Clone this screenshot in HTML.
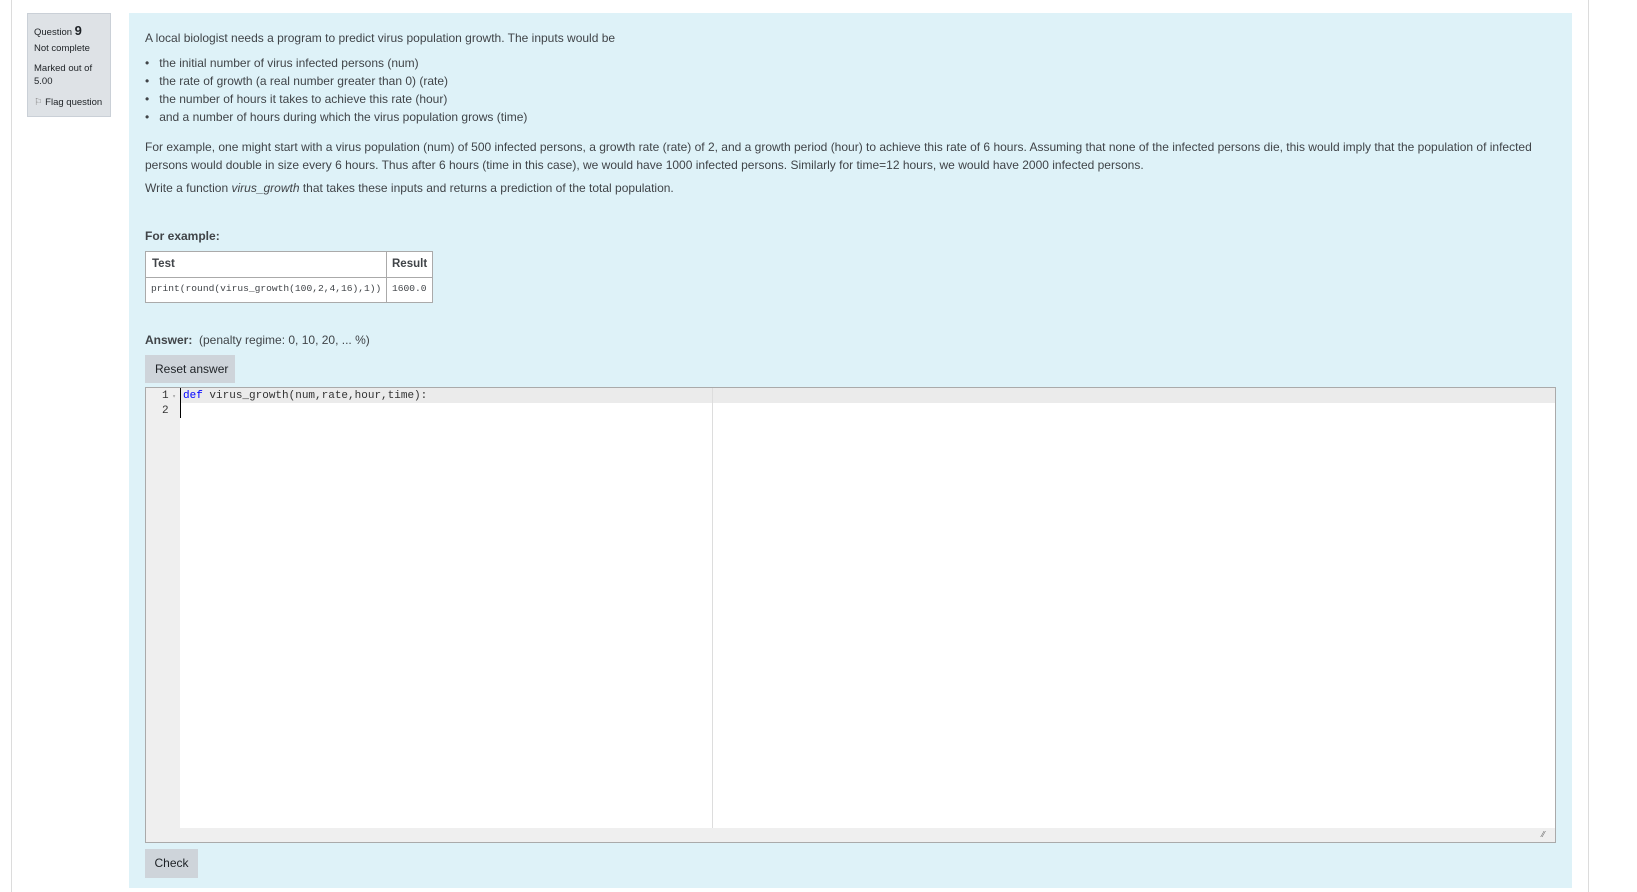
<!DOCTYPE html>
<html><head><meta charset="utf-8"><style>
*{margin:0;padding:0;box-sizing:border-box}
body{width:1637px;height:892px;background:#fff;font-family:"Liberation Sans",sans-serif;color:#404448;font-size:12px;position:relative;overflow:hidden}
.a{position:absolute;white-space:nowrap}
.vl{position:absolute;top:0;width:1px;height:892px;background:#dcdcdc}
.info{position:absolute;left:27px;top:13px;width:84px;height:104px;background:#dee2e6;border:1px solid #cad0d7;font-size:9.5px;color:#1d2125}
.box{position:absolute;left:129px;top:13px;width:1443px;height:875px;background:#def2f8}
.mono{font-family:"Liberation Mono",monospace}
</style></head><body>
<div class="vl" style="left:11px"></div>
<div class="vl" style="left:1588px"></div>
<div class="info">
<div class="a" style="left:6px;top:9px">Question <b style="font-size:13px">9</b></div>
<div class="a" style="left:6px;top:29px">Not complete</div>
<div class="a" style="left:6px;top:49px">Marked out of</div>
<div class="a" style="left:6px;top:62px">5.00</div>
<div class="a" style="left:6px;top:83px"><span style="color:#888">⚐</span> Flag question</div>
</div>
<div class="box"></div>
<div class="a" style="left:145px;top:31px;font-size:12px">A local biologist needs a program to predict virus population growth. The inputs would be</div>
<div class="a" style="left:145px;top:54px;line-height:18px;font-size:12px">
<div>•&nbsp;&nbsp; the initial number of virus infected persons (num)</div>
<div>•&nbsp;&nbsp; the rate of growth (a real number greater than 0) (rate)</div>
<div>•&nbsp;&nbsp; the number of hours it takes to achieve this rate (hour)</div>
<div>•&nbsp;&nbsp; and a number of hours during which the virus population grows (time)</div>
</div>
<div class="a" style="left:145px;top:138px;font-size:12px;line-height:18px">For example, one might start with a virus population (num) of 500 infected persons, a growth rate (rate) of 2, and a growth period (hour) to achieve this rate of 6 hours. Assuming that none of the infected persons die, this would imply that the population of infected<br>persons would double in size every 6 hours. Thus after 6 hours (time in this case), we would have 1000 infected persons. Similarly for time=12 hours, we would have 2000 infected persons.</div>
<div class="a" style="left:145px;top:181px;font-size:12px">Write a function <i>virus_growth</i> that takes these inputs and returns a prediction of the total population.</div>
<div class="a" style="left:145px;top:229px;font-size:12px;font-weight:bold">For example:</div>
<div class="a" style="left:145px;top:251px;width:288px;height:52px;border:1px solid #aaa;background:#fff">
<div class="a" style="left:0;top:25px;width:286px;height:1px;background:#aaa"></div>
<div class="a" style="left:240px;top:0;width:1px;height:50px;background:#aaa"></div>
<div class="a" style="left:6px;top:6px;font-weight:bold;font-size:11.5px">Test</div>
<div class="a" style="left:246px;top:6px;font-weight:bold;font-size:11.5px">Result</div>
<div class="a mono" style="left:5px;top:31px;font-size:9.6px">print(round(virus_growth(100,2,4,16),1))</div>
<div class="a mono" style="left:246px;top:31px;font-size:9.6px">1600.0</div>
</div>
<div class="a" style="left:145px;top:333px;font-size:12px"><b>Answer:</b>&nbsp; (penalty regime: 0, 10, 20, ... %)</div>
<div class="a" style="left:145px;top:355px;width:90px;height:28px;background:#ced4da;font-size:12px;line-height:28px;padding-left:10px;color:#1d2125">Reset answer</div>
<div class="a" style="left:145px;top:387px;width:1411px;height:456px;border:1px solid #aaa;background:#efefef">
<div class="a" style="left:34px;top:0;width:1375px;height:440px;background:#fff"></div>
<div class="a" style="left:34px;top:0;width:1375px;height:15px;background:#ebebeb"></div>
<div class="a" style="left:566px;top:0;width:1px;height:440px;background:#ddd"></div>
<div class="a" style="left:34px;top:0;width:1px;height:30px;background:#000"></div>
<div class="a mono" style="left:16px;top:1px;font-size:11px;line-height:14px;color:#333">1<span style="font-size:6px;color:#999"> ▾</span><br>2</div>
<div class="a mono" style="left:37px;top:1px;font-size:11px;line-height:14px;color:#333"><span style="color:#00f">def</span> virus_growth(num,rate,hour,time):</div>
<div class="a" style="left:1396px;top:442px;font-size:8px;color:#666">⁄⁄</div>
</div>
<div class="a" style="left:145px;top:849px;width:53px;height:29px;background:#ced4da;font-size:12px;line-height:29px;text-align:center;color:#1d2125">Check</div>
</body></html>
